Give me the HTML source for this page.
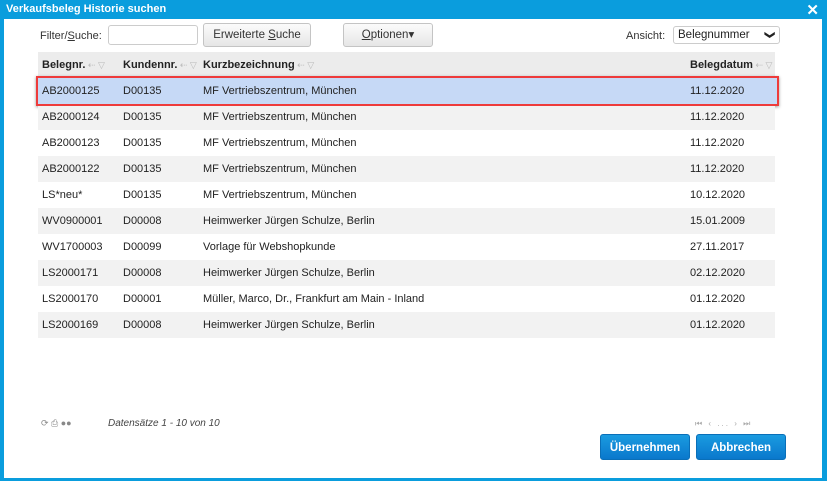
<!DOCTYPE html>
<html><head><meta charset="utf-8"><style>
*{box-sizing:border-box;margin:0;padding:0}
body{width:827px;height:481px;background:#0a9ddd;font-family:"Liberation Sans",Arial,sans-serif;font-size:11px;color:#222;position:relative;overflow:hidden}
.title{position:absolute;left:6px;top:3px;color:#fff;font-weight:bold;font-size:11px}
.x{position:absolute;right:8px;top:1px;color:#fff;font-weight:bold;font-size:15px}
.body{position:absolute;left:4px;top:19px;width:818px;height:459px;background:#fff}
.a{position:absolute}
.btn{position:absolute;border:1px solid #c4c4c4;border-radius:3px;background:linear-gradient(#fbfbfb,#e6e6e6);text-align:center;font-size:11.5px;color:#333}
.row{position:absolute;left:38px;width:737px;height:26px;line-height:27px}
.row span{position:absolute}
.gray{background:#f2f2f2}
.ic{color:#bbb;font-weight:normal;font-size:9px}
.blue{position:absolute;border-radius:3px;background:linear-gradient(#1a9be0,#0a78cc);color:#fff;font-weight:bold;text-align:center;font-size:11.5px;line-height:26px;border:1px solid #0a6fb8}
</style></head><body>
<div class="title">Verkaufsbeleg Historie suchen</div>
<div class="x">✕</div>
<div class="body"></div>
<div class="a" style="left:40px;top:30px;font-size:11px;color:#333">Filter/<u>S</u>uche:</div>
<div class="a" style="left:108px;top:25px;width:90px;height:20px;border:1px solid #ccc;border-radius:3px"></div>
<div class="btn" style="left:203px;top:23px;width:108px;height:24px;line-height:22px">Erweiterte <u>S</u>uche</div>
<div class="btn" style="left:343px;top:23px;width:90px;height:24px;line-height:22px"><u>O</u>ptionen▾</div>
<div class="a" style="left:626px;top:30px;color:#333">Ansicht:</div>
<div class="a" style="left:673px;top:26px;width:107px;height:18px;border:1px solid #ccc;border-radius:3px;padding-left:4px;line-height:16px;font-size:11.5px">Belegnummer<span style="position:absolute;right:6px;top:0;font-weight:bold;font-size:10px;transform:rotate(90deg)">❯</span></div>
<div class="a" style="left:38px;top:52px;width:737px;height:25px;background:#ececec"></div>
<div class="a" style="left:42px;top:59px;font-weight:bold">Belegnr.<span class="ic"> ⇠ ▽</span></div>
<div class="a" style="left:123px;top:59px;font-weight:bold">Kundennr.<span class="ic"> ⇠ ▽</span></div>
<div class="a" style="left:203px;top:59px;font-weight:bold">Kurzbezeichnung<span class="ic"> ⇠ ▽</span></div>
<div class="a" style="left:690px;top:59px;font-weight:bold">Belegdatum<span class="ic"> ⇠ ▽</span></div>
<div class="a" style="left:36px;top:76px;width:743px;height:30px;border:2px solid #ee3b3b;background:#c6d9f6;box-shadow:0 1px 3px #999"></div>
<div class="row" style="top:78px"><span style="left:4px">AB2000125</span><span style="left:85px">D00135</span><span style="left:165px">MF Vertriebszentrum, München</span><span style="left:652px">11.12.2020</span></div>
<div class="row gray" style="top:106px;height:24px;line-height:23px"><span style="left:4px">AB2000124</span><span style="left:85px">D00135</span><span style="left:165px">MF Vertriebszentrum, München</span><span style="left:652px">11.12.2020</span></div>
<div class="row" style="top:130px"><span style="left:4px">AB2000123</span><span style="left:85px">D00135</span><span style="left:165px">MF Vertriebszentrum, München</span><span style="left:652px">11.12.2020</span></div>
<div class="row gray" style="top:156px"><span style="left:4px">AB2000122</span><span style="left:85px">D00135</span><span style="left:165px">MF Vertriebszentrum, München</span><span style="left:652px">11.12.2020</span></div>
<div class="row" style="top:182px"><span style="left:4px">LS*neu*</span><span style="left:85px">D00135</span><span style="left:165px">MF Vertriebszentrum, München</span><span style="left:652px">10.12.2020</span></div>
<div class="row gray" style="top:208px"><span style="left:4px">WV0900001</span><span style="left:85px">D00008</span><span style="left:165px">Heimwerker Jürgen Schulze, Berlin</span><span style="left:652px">15.01.2009</span></div>
<div class="row" style="top:234px"><span style="left:4px">WV1700003</span><span style="left:85px">D00099</span><span style="left:165px">Vorlage für Webshopkunde</span><span style="left:652px">27.11.2017</span></div>
<div class="row gray" style="top:260px"><span style="left:4px">LS2000171</span><span style="left:85px">D00008</span><span style="left:165px">Heimwerker Jürgen Schulze, Berlin</span><span style="left:652px">02.12.2020</span></div>
<div class="row" style="top:286px"><span style="left:4px">LS2000170</span><span style="left:85px">D00001</span><span style="left:165px">Müller, Marco, Dr., Frankfurt am Main - Inland</span><span style="left:652px">01.12.2020</span></div>
<div class="row gray" style="top:312px"><span style="left:4px">LS2000169</span><span style="left:85px">D00008</span><span style="left:165px">Heimwerker Jürgen Schulze, Berlin</span><span style="left:652px">01.12.2020</span></div>
<div class="a" style="left:41px;top:418px;color:#888;font-size:9px">⟳ ⎙ ●●</div>
<div class="a" style="left:108px;top:418px;font-style:italic;font-size:10px;color:#444">Datensätze 1 - 10 von 10</div>
<div class="a" style="left:695px;top:419px;font-size:8px;color:#aaa;letter-spacing:2px">⏮ ‹ ... › ⏭</div>
<div class="blue" style="left:600px;top:434px;width:90px;height:26px">Übernehmen</div>
<div class="blue" style="left:696px;top:434px;width:90px;height:26px">Abbrechen</div>
</body></html>
